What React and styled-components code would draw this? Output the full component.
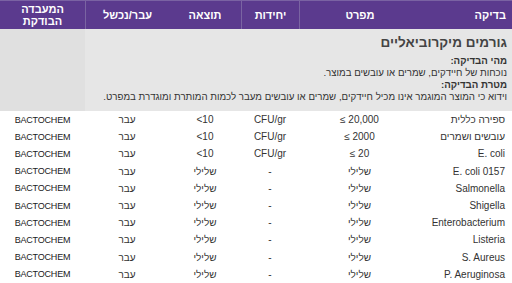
import React from 'react';
import styled, { createGlobalStyle } from 'styled-components';

const GlobalStyle = createGlobalStyle`
  html, body {
    margin: 0;
    padding: 0;
    background: #ffffff;
  }
  body {
    font-family: "Liberation Sans", "DejaVu Sans", Arial, sans-serif;
  }
`;

const COLS = '92px 121px 58px 72px 84px 85px';

const Table = styled.div`
  direction: rtl;
  width: 512px;
  height: 283px;
  overflow: hidden;
  background: #ffffff;
`;

const HeaderRow = styled.div`
  display: grid;
  grid-template-columns: ${COLS};
  height: 29px;
  background: #5b3a8e;
  border-top: 1px solid #7a62a3;
  box-sizing: border-box;
`;

const HeadCell = styled.div`
  display: flex;
  align-items: center;
  justify-content: ${(p) => (p.$right ? 'flex-start' : 'center')};
  padding-right: ${(p) => (p.$right ? '6px' : '0')};
  color: #ffffff;
  font-size: 11px;
  font-weight: bold;
  line-height: 12px;
  text-align: center;
  border-left: ${(p) => (p.$sep ? '1px solid #7a64a2' : 'none')};
`;

const InfoRow = styled.div`
  display: grid;
  grid-template-columns: 427px 85px;
`;

const InfoCell = styled.div`
  background: #e6e6e6;
  padding: 4px 5px 8px 8px;
  color: #333333;
`;

const InfoSide = styled.div`
  background: #e0e0e0;
`;

const Title = styled.div`
  font-size: 13.5px;
  font-weight: bold;
  line-height: 20px;
  color: #444444;
  margin-bottom: 2px;
`;

const InfoLine = styled.div`
  font-size: 9.7px;
  line-height: 12px;
  white-space: nowrap;
  font-weight: ${(p) => (p.$bold ? 'bold' : 'normal')};
`;

const Row = styled.div`
  display: grid;
  grid-template-columns: ${COLS};
  height: 17.2px;
  align-items: center;
  color: #333333;
  font-size: 10px;
`;

const TestName = styled.div`
  text-align: right;
  padding-right: 7px;
  white-space: nowrap;
`;

const Value = styled.div.attrs({ dir: 'ltr' })`
  direction: ltr;
  unicode-bidi: isolate;
  text-align: center;
  white-space: nowrap;
`;

const Lab = styled(Value)`
  font-size: 9px;
  letter-spacing: -0.2px;
  color: #1a1a1a;
`;

const rows = [
  ['ספירה כללית', '≤ 20,000', 'CFU/gr', '<10'],
  ['עובשים ושמרים', '≤ 2000', 'CFU/gr', '<10'],
  ['E. coli', '≤ 20', 'CFU/gr', '<10'],
  ['E. coli 0157', 'שלילי', '-', 'שלילי'],
  ['Salmonella', 'שלילי', '-', 'שלילי'],
  ['Shigella', 'שלילי', '-', 'שלילי'],
  ['Enterobacterium', 'שלילי', '-', 'שלילי'],
  ['Listeria', 'שלילי', '-', 'שלילי'],
  ['S. Aureus', 'שלילי', '-', 'שלילי'],
  ['P. Aeruginosa', 'שלילי', '-', 'שלילי'],
];

const App = () => {
  return (
    <>
      <GlobalStyle />
      <Table>
        <HeaderRow>
          <HeadCell $right>בדיקה</HeadCell>
          <HeadCell $sep>מפרט</HeadCell>
          <HeadCell $sep>יחידות</HeadCell>
          <HeadCell>תוצאה</HeadCell>
          <HeadCell $sep>עבר/נכשל</HeadCell>
          <HeadCell>
            המעבדה
            <br />
            הבודקת
          </HeadCell>
        </HeaderRow>
        <InfoRow>
          <InfoCell>
            <Title>גורמים מיקרוביאליים</Title>
            <InfoLine $bold>מהי הבדיקה:</InfoLine>
            <InfoLine>נוכחות של חיידקים, שמרים או עובשים במוצר.</InfoLine>
            <InfoLine $bold>מטרת הבדיקה:</InfoLine>
            <InfoLine>
              וידוא כי המוצר המוגמר אינו מכיל חיידקים, שמרים או עובשים מעבר לכמות המותרת ומוגדרת במפרט.
            </InfoLine>
          </InfoCell>
          <InfoSide />
        </InfoRow>
        {rows.map((r) => (
          <Row key={r[0]}>
            <TestName>{r[0]}</TestName>
            <Value>{r[1]}</Value>
            <Value>{r[2]}</Value>
            <Value>{r[3]}</Value>
            <Value>עבר</Value>
            <Lab>BACTOCHEM</Lab>
          </Row>
        ))}
      </Table>
    </>
  );
};

export default App;
